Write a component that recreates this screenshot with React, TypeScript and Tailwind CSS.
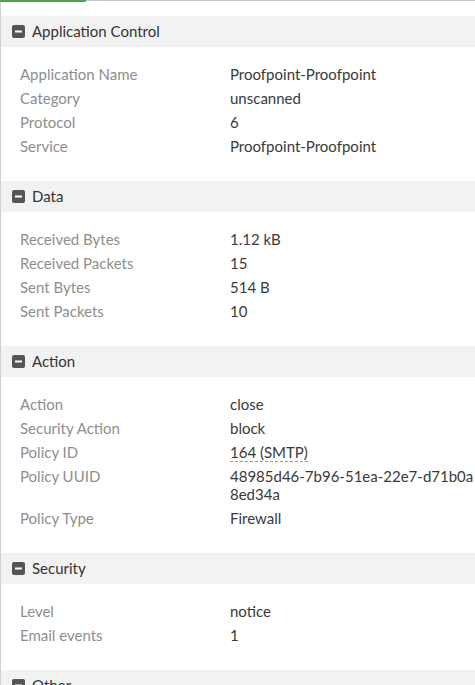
import React from "react";

type Row = { label: string; value: string; link?: boolean };
type Section = { title: string; rows: Row[] };

const SECTIONS: Section[] = [
  {
    title: "Application Control",
    rows: [
      { label: "Application Name", value: "Proofpoint-Proofpoint" },
      { label: "Category", value: "unscanned" },
      { label: "Protocol", value: "6" },
      { label: "Service", value: "Proofpoint-Proofpoint" },
    ],
  },
  {
    title: "Data",
    rows: [
      { label: "Received Bytes", value: "1.12 kB" },
      { label: "Received Packets", value: "15" },
      { label: "Sent Bytes", value: "514 B" },
      { label: "Sent Packets", value: "10" },
    ],
  },
  {
    title: "Action",
    rows: [
      { label: "Action", value: "close" },
      { label: "Security Action", value: "block" },
      { label: "Policy ID", value: "164 (SMTP)", link: true },
      { label: "Policy UUID", value: "48985d46-7b96-51ea-22e7-d71b0a8ed34a" },
      { label: "Policy Type", value: "Firewall" },
    ],
  },
  {
    title: "Security",
    rows: [
      { label: "Level", value: "notice" },
      { label: "Email events", value: "1" },
    ],
  },
  { title: "Other", rows: [] },
];

function MinusBox() {
  return (
    <svg width="13" height="13" viewBox="0 0 13 13" className="shrink-0">
      <rect x="0" y="0" width="13" height="13" rx="2" fill="#555555" />
      <rect x="3" y="5.5" width="7" height="2" fill="#ffffff" />
    </svg>
  );
}

export default function App() {
  return (
    <div
      className="w-[475px] h-[685px] overflow-hidden bg-white text-[#333]"
      style={{ fontFamily: "Lato, 'Open Sans', sans-serif" }}
    >
      {/* top tab strip */}
      <div className="flex h-[2px]">
        <div className="w-[86px] bg-[#5a9c5a]" />
        <div className="flex-1 border-t border-[#c8c8c8]" />
      </div>

      <div className="border-l border-[#cfcfcf] pt-[14px] min-h-[683px]">
        {SECTIONS.map((s) => (
          <div key={s.title}>
            <div className="h-[31px] bg-[#f2f2f2] flex items-center gap-[7px] pl-[11px]">
              <MinusBox />
              <span className="text-[15px] leading-none text-[#333]">{s.title}</span>
            </div>
            {s.rows.length > 0 && (
              <div className="pt-[15px] pb-[23px]">
                {s.rows.map((r) => (
                  <div key={r.label} className="flex pl-[19px] py-[3px] text-[15px] leading-[18px]">
                    <div className="w-[210px] shrink-0 text-[#8e8e8e]">{r.label}</div>
                    <div className="flex-1 break-all text-[#3a3a3a]">
                      {r.link ? (
                        <span className="border-b border-dashed border-[#999]">{r.value}</span>
                      ) : (
                        r.value
                      )}
                    </div>
                  </div>
                ))}
              </div>
            )}
          </div>
        ))}
      </div>
    </div>
  );
}
